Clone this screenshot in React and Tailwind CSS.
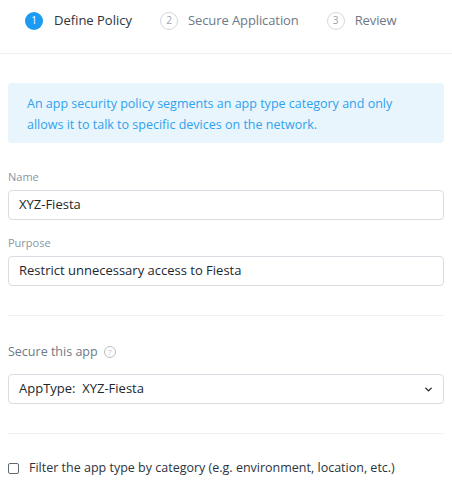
import React from 'react';
import { ChevronDown } from 'lucide-react';

const steps = [
  { n: 1, label: 'Define Policy', active: true },
  { n: 2, label: 'Secure Application' },
  { n: 3, label: 'Review' },
];

function Field({ label, value }) {
  return (
    <div>
      <div className="h-[16px] text-[11px] leading-[16px] text-[#8a96a3]">{label}</div>
      <div className="mt-[5px] flex h-[30px] items-center rounded border border-[#d8dde3] px-[10px] text-[13px] text-[#22272e]">
        {value}
      </div>
    </div>
  );
}

export default function App() {
  return (
    <div className="min-h-[487px] bg-white font-['Open_Sans',sans-serif]">
      <div className="flex h-[54px] items-start border-b border-[#eef0f2] pl-[25px] pt-[11px]">
        {steps.map((s) => (
          <div key={s.n} className="mr-[28px] flex items-center">
            <div
              className={
                s.active
                  ? 'flex h-[18px] w-[18px] items-center justify-center rounded-full bg-[#1b9cf2] text-[10px] text-white'
                  : 'flex h-[18px] w-[18px] items-center justify-center rounded-full border border-[#d3d8de] text-[10px] text-[#9aa4ae]'
              }
            >
              {s.n}
            </div>
            <span
              className={
                s.active
                  ? 'ml-[11px] text-[13px] text-[#2c343d]'
                  : 'ml-[10px] text-[13px] tracking-[-0.1px] text-[#6d7a87]'
              }
            >
              {s.label}
            </span>
          </div>
        ))}
      </div>

      <div className="px-2">
        <div className="mt-[29px] rounded-[4px] bg-[#e8f5fd] pb-[8px] pt-[10px] pl-[19px] text-[12.5px] leading-[21px] text-[#2fa2ee]">
          An app security policy segments an app type category and only
          <br />
          allows it to talk to specific devices on the network.
        </div>

        <div className="mt-[26px]">
          <Field label="Name" value="XYZ-Fiesta" />
        </div>
        <div className="mt-[15px]">
          <Field label="Purpose" value="Restrict unnecessary access to Fiesta" />
        </div>

        <div className="mt-[29px] border-t border-[#f0f1f3]" />

        <div className="mt-[26px] flex h-[20px] items-center text-[12.5px] text-[#6d7a87]">
          Secure this app
          <span className="ml-[6px] flex h-[12px] w-[12px] items-center justify-center rounded-full border border-[#b8c0c8] text-[8px] leading-none text-[#b8c0c8]">
            ?
          </span>
        </div>

        <div className="mt-[12px] flex h-[30px] items-center justify-between rounded border border-[#d8dde3] pl-[10px] pr-[9px] text-[13px] text-[#22272e]">
          <span>AppType:&nbsp; XYZ-Fiesta</span>
          <ChevronDown size={11} strokeWidth={3} className="text-[#22272e]" />
        </div>

        <div className="mt-[29px] border-t border-[#f0f1f3]" />

        <div className="mt-[25px] flex items-center">
          <div className="h-[11px] w-[11px] rounded-[2px] border border-[#5e6873]" />
          <span className="ml-[10px] text-[12.5px] text-[#2c343d]">
            Filter the app type by category (e.g. environment, location, etc.)
          </span>
        </div>
      </div>
    </div>
  );
}
